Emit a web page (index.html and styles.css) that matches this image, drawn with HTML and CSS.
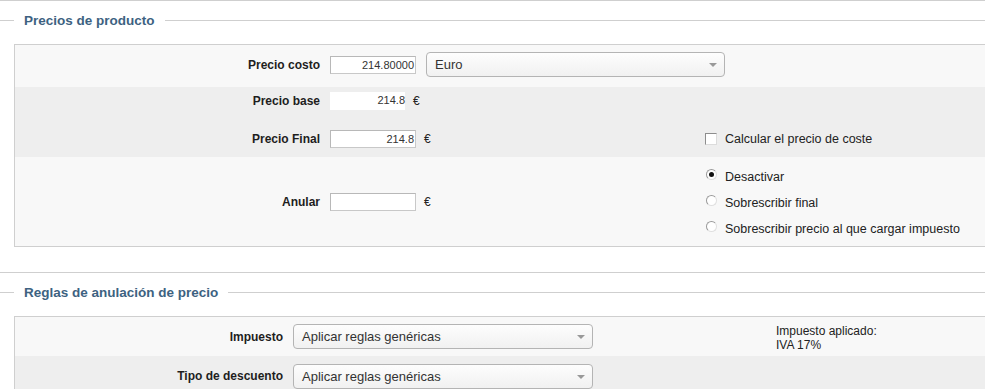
FILE: index.html
```html
<!DOCTYPE html>
<html lang="es">
<head>
  <meta charset="UTF-8" />
  <title>Precios de producto</title>
  <link rel="stylesheet" href="styles.css">
</head>
<body>

  <section class="block">
    <div class="legend"><span>Precios de producto</span></div>

    <div class="form-box prices">
      <div class="row light r1">
        <label class="lbl">Precio costo</label>
        <div class="field">
          <span class="input num">214.80000</span>
          <span class="select euro">Euro<i class="arrow"></i></span>
        </div>
        <div class="side"></div>
      </div>

      <div class="row gray r2">
        <label class="lbl">Precio base</label>
        <div class="field">
          <span class="input num plain">214.8</span>
          <span class="cur">€</span>
        </div>
        <div class="side"></div>
      </div>

      <div class="row gray r3">
        <label class="lbl">Precio Final</label>
        <div class="field">
          <span class="input num">214.8</span>
          <span class="cur">€</span>
        </div>
        <div class="side">
          <div class="opt"><span class="check"></span>Calcular el precio de coste</div>
        </div>
      </div>

      <div class="row light r4">
        <label class="lbl">Anular</label>
        <div class="field">
          <span class="input num"></span>
          <span class="cur">€</span>
        </div>
        <div class="side radios">
          <div class="opt"><span class="radio on"></span>Desactivar</div>
          <div class="opt"><span class="radio"></span>Sobrescribir final</div>
          <div class="opt"><span class="radio"></span>Sobrescribir precio al que cargar impuesto</div>
        </div>
      </div>
    </div>
  </section>

  <section class="block second">
    <div class="legend"><span>Reglas de anulación de precio</span></div>

    <div class="form-box rules">
      <div class="row light r5">
        <label class="lbl">Impuesto</label>
        <div class="field">
          <span class="select rule">Aplicar reglas genéricas<i class="arrow"></i></span>
        </div>
        <div class="side note">Impuesto aplicado:<br>IVA 17%</div>
      </div>

      <div class="row gray r6">
        <label class="lbl">Tipo de descuento</label>
        <div class="field">
          <span class="select rule">Aplicar reglas genéricas<i class="arrow"></i></span>
        </div>
        <div class="side"></div>
      </div>
    </div>
  </section>

</body>
</html>
```

FILE: styles.css
```css
html, body {
  margin: 0;
  overflow: hidden;
}

body {
  background: #fff;
  color: #222;
  font-family: "Liberation Sans", Arial, sans-serif;
  font-size: 12px;
}

.block {
  border-top: 1px solid #cfcfcf;
  padding-top: 11px;
}

.block.second {
  margin-top: 25px;
}

.legend {
  display: flex;
  align-items: center;
  gap: 10px;
  height: 17px;
  font-size: 13.5px;
  font-weight: bold;
  color: #3d6281;
}

.legend::before {
  content: "";
  width: 14px;
  border-top: 1px solid #cfcfcf;
}

.legend::after {
  content: "";
  flex: 1;
  border-top: 1px solid #cfcfcf;
}

.form-box {
  margin: 15px 0 0 14px;
  border: 1px solid #cfcfcf;
  border-right: none;
}

.row {
  box-sizing: border-box;
  display: grid;
  align-items: center;
  column-gap: 10px;
}

.prices .row {
  grid-template-columns: 305px 365px 1fr;
}

.rules .row {
  grid-template-columns: 268px 473px 1fr;
}

.light { background: #f8f8f8; }
.gray { background: #eeeeee; }

.r1 { height: 42px; padding-bottom: 3px; }
.r2 { height: 34px; padding-bottom: 6px; }
.r3 { height: 36px; }
.r4 { height: 89px; }
.r5 { height: 39px; }
.r6 { height: 40px; }

.lbl {
  text-align: right;
  font-weight: bold;
  color: #1e1e1e;
}

.field {
  display: flex;
  align-items: center;
}

.field > * {
  flex-shrink: 0;
}

.input {
  box-sizing: border-box;
  width: 86px;
  height: 18px;
  line-height: 16px;
  border: 1px solid #c8c8c8;
  border-top-color: #b8b8b8;
  border-left-color: #b8b8b8;
  background: #fff;
  padding: 0 1px;
  font-size: 11px;
  color: #333;
}

.input.num {
  text-align: right;
}

.input.plain {
  width: 75px;
  border: none;
  padding: 0;
}

.cur {
  margin-left: 8px;
  color: #222;
}

.select {
  position: relative;
  box-sizing: border-box;
  height: 25px;
  line-height: 23px;
  border: 1px solid #b4b4b4;
  border-radius: 4px;
  background: linear-gradient(#fdfdfd, #f1f1f1);
  padding-left: 8px;
  font-size: 13px;
  color: #333;
}

.select.euro {
  width: 299px;
  margin-left: 10px;
}

.select.rule {
  width: 300px;
}

.arrow {
  position: absolute;
  right: 7px;
  top: 10px;
  border-left: 4px solid transparent;
  border-right: 4px solid transparent;
  border-top: 4px solid #999;
}

.side {
  color: #222;
  font-size: 12.5px;
}

.opt {
  display: flex;
  align-items: center;
  height: 26px;
}

.check {
  box-sizing: border-box;
  width: 12px;
  height: 12px;
  border: 1px solid #8d8d8d;
  border-right-color: #dcdcdc;
  border-bottom-color: #dcdcdc;
  background: #fff;
  margin-right: 8px;
}

.radio {
  position: relative;
  box-sizing: border-box;
  width: 11px;
  height: 11px;
  border-radius: 50%;
  border: 1px solid #9a9a9a;
  border-right-color: #e0e0e0;
  border-bottom-color: #e0e0e0;
  background: #fff;
  margin: 0 8px 4px 1px;
}

.radio.on::after {
  content: "";
  position: absolute;
  left: 2px;
  top: 2px;
  width: 5px;
  height: 5px;
  border-radius: 50%;
  background: #111;
}

.radios {
  padding-top: 2px;
}

.note {
  font-size: 12px;
  line-height: 14px;
  align-self: start;
  margin-top: 7px;
}
```
